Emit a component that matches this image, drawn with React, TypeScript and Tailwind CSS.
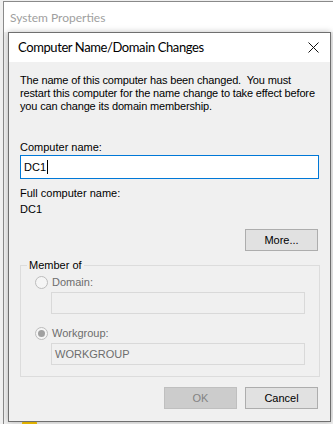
function Radio({ checked }: { checked?: boolean }) {
  return (
    <span className="w-[13px] h-[13px] rounded-full border border-[#bcbcbc] bg-[#f5f5f5] flex items-center justify-center">
      {checked && <span className="w-[7px] h-[7px] rounded-full bg-[#a0a0a0]" />}
    </span>
  );
}

function Button({ label, disabled }: { label: string; disabled?: boolean }) {
  return (
    <div
      className={`w-[73px] h-[22px] border flex items-center justify-center ${
        disabled
          ? "bg-[#cccccc] border-[#bfbfbf] text-[#838383]"
          : "bg-[#e1e1e1] border-[#adadad] text-black"
      }`}
    >
      {label}
    </div>
  );
}

const uiFont = { fontFamily: 'Lato, "Noto Sans", sans-serif' };

export default function App() {
  return (
    <div
      className="relative w-[333px] h-[424px] overflow-hidden bg-[#f0f0f0] text-[11px] leading-[13px] text-black"
      style={{ fontFamily: '"Liberation Sans", Arial, sans-serif' }}
    >
      {/* parent window behind */}
      <div className="h-[31px] bg-white border-t border-l border-[#8a8a8a] ml-[3px] mt-[1px] flex items-center pl-[6px]">
        <span className="text-[12px] text-[#a0a0a0]" style={uiFont}>
          System Properties
        </span>
      </div>
      <div className="flex">
        <div className="ml-[3px] w-px h-[393px] bg-[#8a8a8a]" />
      </div>
      {/* icon of the parent window peeking under the dialog */}
      <div className="absolute left-[22px] top-[421px] w-[15px] h-[4px] rounded-t-[2px] bg-[#f7c300]" />

      {/* dialog */}
      <div className="absolute left-[8px] top-[32px] w-[323px] h-[390px] border border-[#6f6f6f] bg-[#f0f0f0] flex flex-col shadow-[0_0_6px_rgba(0,0,0,0.25)]">
        <div className="h-[29px] bg-white flex items-center justify-between pl-[9px] pr-[10px] shrink-0">
          <span className="text-[13px] tracking-[-0.4px] text-black" style={uiFont}>
            Computer Name/Domain Changes
          </span>
          <svg width="11" height="11" viewBox="0 0 11 11" className="mr-[1px]">
            <path d="M0.5 0.5 L10.5 10.5 M10.5 0.5 L0.5 10.5" stroke="#111" strokeWidth="1" />
          </svg>
        </div>

        <div className="px-[11px] pt-[12px] flex flex-col">
          <p className="w-[310px] whitespace-nowrap tracking-[-0.15px]">
            The name of this computer has been changed.&nbsp; You must
            <br />
            restart this computer for the name change to take effect before
            <br />
            you can change its domain membership.
          </p>

          <div className="mt-[28px]">Computer name:</div>
          <div className="mt-[1px] w-[299px] h-[24px] border border-[#0078d7] bg-white flex items-center pl-[3px]">
            <span>DC1</span>
            <span className="w-px h-[14px] bg-black ml-[1px]" />
          </div>

          <div className="mt-[8px]">Full computer name:</div>
          <div className="mt-[3px]">DC1</div>

          <div className="mt-[13px] flex justify-end pr-[1px]">
            <Button label="More..." />
          </div>

          <fieldset className="mt-[8px] w-[300px] h-[118px] border border-[#dcdcdc]">
            <legend className="ml-[6px] px-[2px] text-black">Member of</legend>
            <div className="px-[14px]">
              <div className="flex items-center gap-[4px] mt-[4px] text-[#6d6d6d]">
                <Radio />
                <span>Domain:</span>
              </div>
              <div className="ml-[16px] mt-[3px] w-[254px] h-[22px] border border-[#d9d9d9] bg-[#f0f0f0]" />
              <div className="flex items-center gap-[4px] mt-[13px] text-[#6d6d6d]">
                <Radio checked />
                <span>Workgroup:</span>
              </div>
              <div className="ml-[16px] mt-[3px] w-[254px] h-[22px] border border-[#d9d9d9] bg-[#f0f0f0] flex items-center pl-[3px] text-[#6d6d6d]">
                WORKGROUP
              </div>
            </div>
          </fieldset>

          <div className="mt-[10px] flex justify-end gap-[8px] pr-[1px]">
            <Button label="OK" disabled />
            <Button label="Cancel" />
          </div>
        </div>
      </div>
    </div>
  );
}
